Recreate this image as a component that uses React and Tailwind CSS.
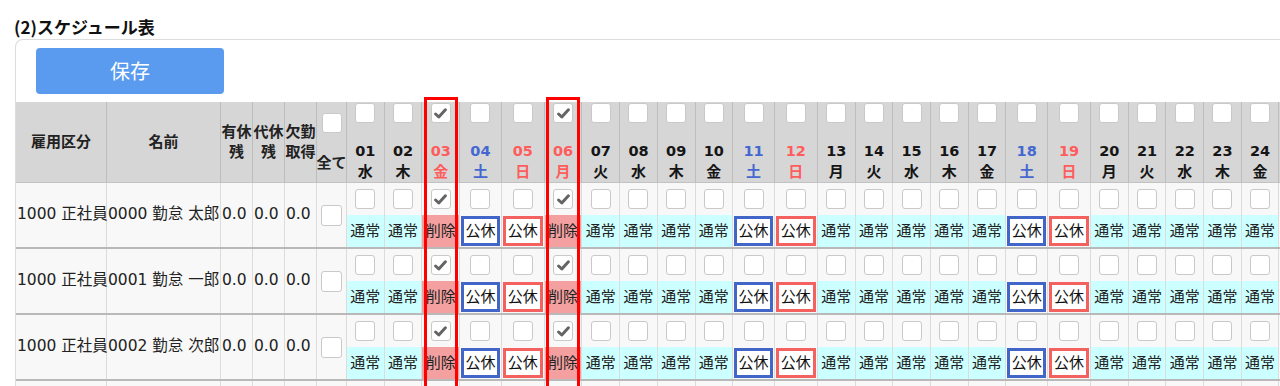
import React from "react";

const DAYS = [
  ["01", "水", "n"], ["02", "木", "n"], ["03", "金", "h"], ["04", "土", "sat"],
  ["05", "日", "sun"], ["06", "月", "h"], ["07", "火", "n"], ["08", "水", "n"],
  ["09", "木", "n"], ["10", "金", "n"], ["11", "土", "sat"], ["12", "日", "sun"],
  ["13", "月", "n"], ["14", "火", "n"], ["15", "水", "n"], ["16", "木", "n"],
  ["17", "金", "n"], ["18", "土", "sat"], ["19", "日", "sun"], ["20", "月", "n"],
  ["21", "火", "n"], ["22", "水", "n"], ["23", "木", "n"], ["24", "金", "n"],
  ["25", "土", "sat"], ["26", "日", "sun"], ["27", "月", "n"],
];

const WIDTH = {
  n: "w-[37.7px]",
  h: "w-[37.7px]",
  sat: "w-[41.7px]",
  sun: "w-[43px]",
};

const HEAD_COLOR = {
  n: "text-[#151515]",
  h: "text-[#ff5c5c]",
  sat: "text-[#4468d0]",
  sun: "text-[#ff5c5c]",
};

const ROWS = [
  ["1000 正社員", "0000 勤怠 太郎"],
  ["1000 正社員", "0001 勤怠 一郎"],
  ["1000 正社員", "0002 勤怠 次郎"],
  ["1000 正社員", "0003 勤怠 三郎"],
];

function Check({ checked, size = "w-[20px] h-[20px]" }) {
  return (
    <div
      className={`${size} bg-white border border-[#c9c9c9] rounded-[3px] flex items-center justify-center shrink-0`}
    >
      {checked && (
        <svg width="13" height="11" viewBox="0 0 13 11">
          <path
            d="M1.6 6 L4.8 9 L11.4 1.8"
            fill="none"
            stroke="#646464"
            strokeWidth="3"
            strokeLinecap="round"
            strokeLinejoin="round"
          />
        </svg>
      )}
    </div>
  );
}

function HeadLabel({ w, children }) {
  return (
    <div
      className={`${w} shrink-0 h-full border-r border-[#bdbdbd] flex items-center justify-center text-center font-bold text-[15px] leading-[20px] text-[#222]`}
    >
      {children}
    </div>
  );
}

function Status({ kind }) {
  if (kind === "h") {
    return (
      <div className="h-[32px] bg-[#f4a0a0] flex items-center justify-center text-[15px] text-[#222] whitespace-nowrap">
        削除
      </div>
    );
  }
  if (kind === "sat" || kind === "sun") {
    return (
      <div className="h-[32px] p-px bg-[#f8f8f8]">
        <div
          className={`h-full bg-white border-[3px] ${
            kind === "sat" ? "border-[#4266c8]" : "border-[#f4625f]"
          } flex items-center justify-center text-[15px] text-[#111] whitespace-nowrap`}
        >
          公休
        </div>
      </div>
    );
  }
  return (
    <div className="h-[32px] bg-[#ccffff] flex items-center justify-center text-[15px] text-[#222] whitespace-nowrap">
      通常
    </div>
  );
}

function DataCell({ w, children }) {
  return (
    <div
      className={`${w} shrink-0 border-r border-[#dcdcdc] flex items-center pl-px text-[15.5px] text-[#222] whitespace-nowrap`}
    >
      {children}
    </div>
  );
}

export default function App() {
  return (
    <div className="w-[1280px] h-[386px] overflow-hidden bg-white font-['DejaVu_Sans','Noto_Sans_CJK_JP',sans-serif]">
      <div className="pt-[16px] pl-[14px] text-[17px] leading-[22px] font-bold text-[#111] font-['Noto_Sans_CJK_JP',sans-serif]">
        (2)スケジュール表
      </div>
      <div className="ml-[15px] mt-px w-max border-l border-t border-[#dcdcdc] rounded-tl-[8px] bg-white">
        <div className="pt-[8px] pb-[8px] pl-[20px]">
          <div className="w-[188px] h-[46px] rounded-[4px] bg-[#5a9bef] flex items-center justify-center text-white text-[20px] font-['Noto_Sans_CJK_JP',sans-serif]">
            保存
          </div>
        </div>

        {/* header row */}
        <div className="flex w-max h-[81px] bg-[#d6d6d6] border-b border-[#c2c2c2]">
          <HeadLabel w="w-[91px]">雇用区分</HeadLabel>
          <HeadLabel w="w-[114px]">名前</HeadLabel>
          <HeadLabel w="w-[32px]">
            有休
            <br />
            残
          </HeadLabel>
          <HeadLabel w="w-[32px]">
            代休
            <br />
            残
          </HeadLabel>
          <HeadLabel w="w-[32px]">
            欠勤
            <br />
            取得
          </HeadLabel>
          <div className="w-[30px] shrink-0 h-full border-r border-[#bdbdbd] flex flex-col items-center justify-center gap-[19px]">
            <Check />
            <div className="font-bold text-[15px] leading-[20px] text-[#222] whitespace-nowrap font-['Noto_Sans_CJK_JP',sans-serif]">
              全て
            </div>
          </div>
          {DAYS.map(([d, wd, k]) => (
            <div
              key={d}
              className={`${WIDTH[k]} relative shrink-0 h-full border-r border-[#bdbdbd] flex flex-col items-center justify-between pt-px pb-[2px]`}
            >
              <Check checked={k === "h"} />
              <div className={`flex flex-col items-center font-bold ${HEAD_COLOR[k]}`}>
                <div className="text-[14.5px] leading-[19px]">{d}</div>
                <div className="text-[15px] leading-[19px] font-['Noto_Sans_CJK_JP',sans-serif]">
                  {wd}
                </div>
              </div>
              {k === "h" && (
                <div className="absolute left-[1.5px] right-[1.5px] top-[-5px] h-[330px] border-[3px] border-[#ff0000] z-10 pointer-events-none" />
              )}
            </div>
          ))}
        </div>

        {/* data rows */}
        {ROWS.map(([kubun, name], ri) => (
          <div
            key={ri}
            className="flex w-max h-[66px] bg-[#f8f8f8] border-b-2 border-[#b9b9b9]"
          >
            <DataCell w="w-[91px]">{kubun}</DataCell>
            <DataCell w="w-[114px]">{name}</DataCell>
            <DataCell w="w-[32px]">0.0</DataCell>
            <DataCell w="w-[32px]">0.0</DataCell>
            <DataCell w="w-[32px]">0.0</DataCell>
            <div className="w-[30px] shrink-0 border-r border-[#dcdcdc] flex items-center justify-center">
              <Check size="w-[21px] h-[21px]" />
            </div>
            {DAYS.map(([d, , k]) => (
              <div
                key={d}
                className={`${WIDTH[k]} shrink-0 border-r border-[#dcdcdc] flex flex-col`}
              >
                <div className="h-[32px] flex items-center justify-center">
                  <Check checked={k === "h"} />
                </div>
                <Status kind={k} />
              </div>
            ))}
          </div>
        ))}
      </div>
    </div>
  );
}
